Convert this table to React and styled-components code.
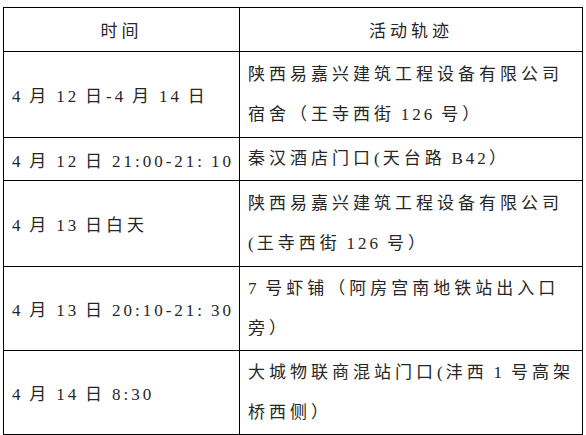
import React from 'react';
import styled, { createGlobalStyle } from 'styled-components';

const GlobalStyle = createGlobalStyle`
  html, body {
    margin: 0;
    padding: 0;
    background: #fff;
  }
  body {
    font-family: "Liberation Serif", "Noto Sans CJK SC", serif;
    color: #262626;
  }
`;

const Page = styled.div`
  padding: 7px 0 0 3px;
`;

const Table = styled.table`
  border-collapse: collapse;
  table-layout: fixed;
  width: 579px;
`;

const HeadCell = styled.th`
  border: 1px solid #000;
  height: 43px;
  padding: 0;
  font-weight: normal;
  font-size: 17px;
  letter-spacing: 4px;
  text-align: center;
  vertical-align: middle;
`;

const Cell = styled.td`
  border: 1px solid #000;
  height: ${(p) => p.$h}px;
  padding: 0 0 0 8px;
  font-size: 17px;
  letter-spacing: 4px;
  white-space: nowrap;
  vertical-align: middle;
`;

const Line = styled.div`
  line-height: 40px;
  white-space: nowrap;
`;

const Latin = styled.span`
  letter-spacing: 3px;
`;

const Gap = styled.span`
  letter-spacing: 1.6px;
`;

// latin runs a little tighter than CJK, spaces with light tracking
const Text = ({ children }) =>
  children.split(/([0-9A-Za-z:\-.(]+| )/).map((part, i) => {
    if (!(i % 2)) return part;
    if (part === ' ') return <Gap key={i}> </Gap>;
    return <Latin key={i}>{part}</Latin>;
  });

const rows = [
  { h: 85, time: '4 月 12 日-4 月 14 日', place: ['陕西易嘉兴建筑工程设备有限公司', '宿舍（王寺西街 126 号）'] },
  { h: 42, time: '4 月 12 日 21:00-21: 10', place: ['秦汉酒店门口(天台路 B42）'] },
  { h: 85, time: '4 月 13 日白天', place: ['陕西易嘉兴建筑工程设备有限公司', '(王寺西街 126 号）'] },
  { h: 83, time: '4 月 13 日 20:10-21: 30', place: ['7 号虾铺（阿房宫南地铁站出入口', '旁）'] },
  { h: 83, time: '4 月 14 日 8:30', place: ['大城物联商混站门口(沣西 1 号高架', '桥西侧）'] },
];

export default function App() {
  return (
    <Page>
      <GlobalStyle />
      <Table>
        <colgroup>
          <col style={{ width: 236 }} />
          <col style={{ width: 343 }} />
        </colgroup>
        <thead>
          <tr>
            <HeadCell>时间</HeadCell>
            <HeadCell>活动轨迹</HeadCell>
          </tr>
        </thead>
        <tbody>
          {rows.map((r, i) => (
            <tr key={i}>
              <Cell $h={r.h}>
                <Text>{r.time}</Text>
              </Cell>
              <Cell $h={r.h}>
                {r.place.map((l, j) => (
                  <Line key={j}>
                    <Text>{l}</Text>
                  </Line>
                ))}
              </Cell>
            </tr>
          ))}
        </tbody>
      </Table>
    </Page>
  );
}
